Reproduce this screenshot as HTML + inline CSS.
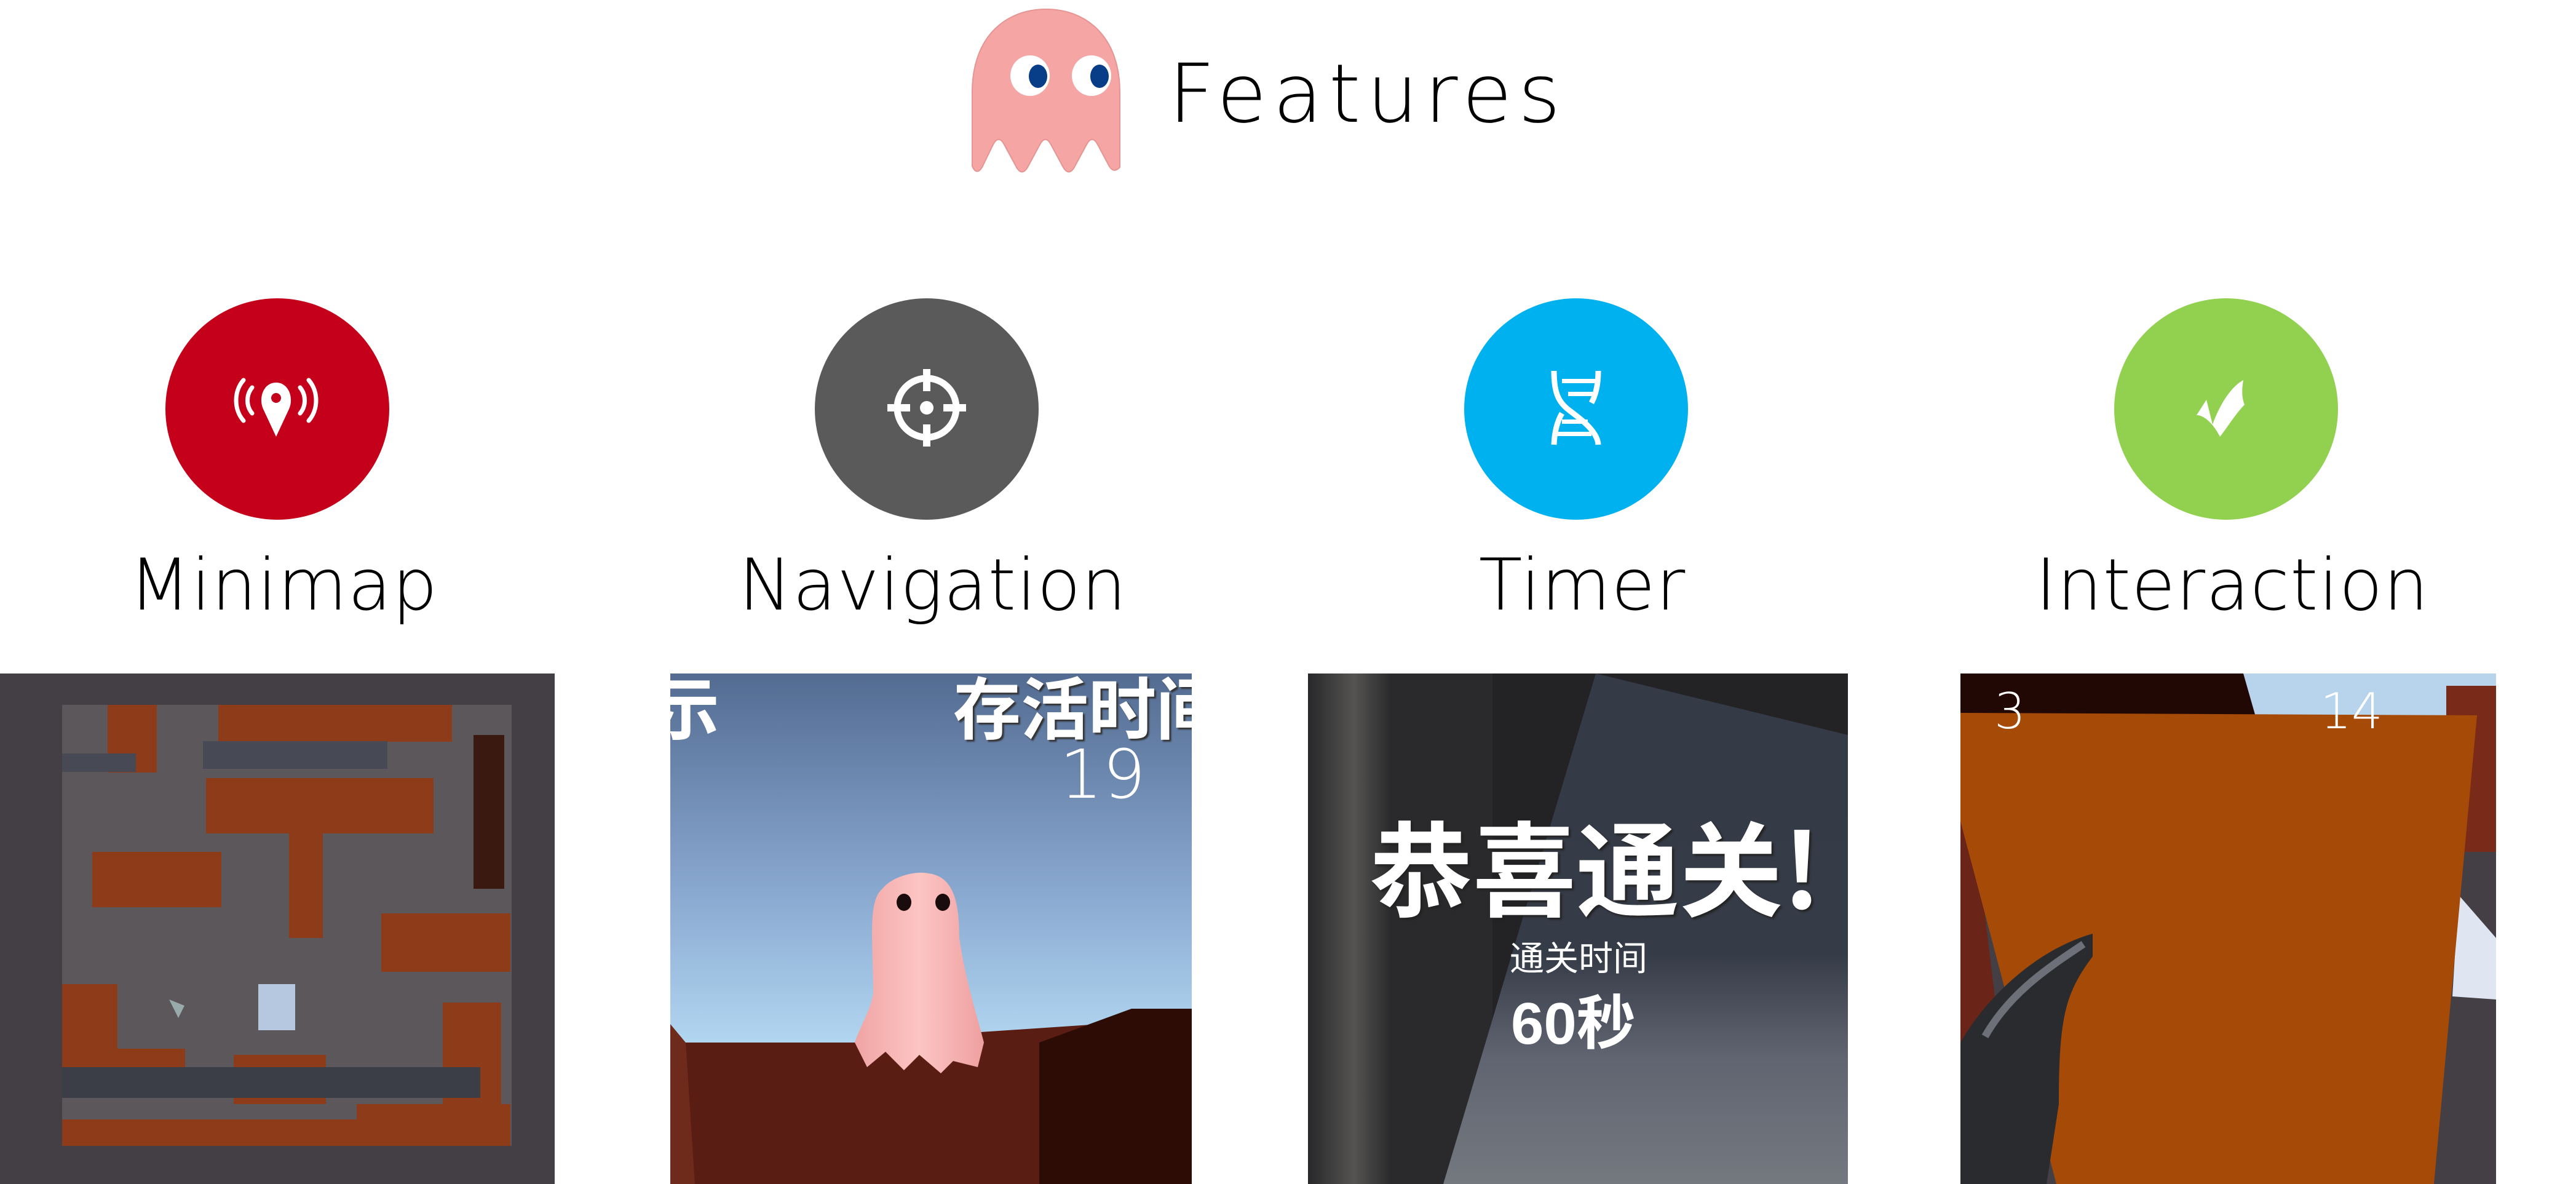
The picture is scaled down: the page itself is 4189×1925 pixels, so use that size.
<!DOCTYPE html>
<html><head><meta charset="utf-8"><style>
html,body{margin:0;padding:0;background:#fff;}
body{width:4189px;height:1925px;position:relative;overflow:hidden;font-family:"Liberation Sans","Noto Sans CJK SC",sans-serif;}
.abs{position:absolute;}
.circ{position:absolute;width:364px;height:360px;border-radius:50%;}
.lbl{position:absolute;top:882px;height:160px;font-size:116px;font-weight:normal;color:#000;text-align:center;width:700px;letter-spacing:1px;line-height:140px;font-family:"DejaVu Sans","Liberation Sans",sans-serif;font-weight:200;}
.img{position:absolute;top:1095px;height:830px;overflow:hidden;}
</style></head><body>

<svg class="abs" style="left:1575px;top:10px" width="255" height="280" viewBox="0 0 255 280">
<path d="M6,260 L6,140 C6,50 60,5 126,5 C192,5 246,50 246,140 L246,262 C238,270 232,268 226,255 L210,225 C204,214 198,214 192,225 L172,262 C166,272 160,272 154,262 L134,225 C128,214 122,214 116,225 L96,262 C90,272 84,272 78,262 L58,225 C52,214 46,214 40,225 L22,262 C16,272 10,270 6,260 Z" fill="#f5a5a3" stroke="#e59593" stroke-width="2"/>
<ellipse cx="100" cy="113" rx="32" ry="33" fill="#fff"/>
<ellipse cx="200" cy="113" rx="32" ry="33" fill="#fff"/>
<ellipse cx="113" cy="114" rx="15" ry="19" fill="#083d88"/>
<ellipse cx="213" cy="114" rx="15" ry="19" fill="#083d88"/>
</svg>
<div class="abs" style="left:1900px;top:78px;font-size:132px;letter-spacing:10px;line-height:150px;color:#000;font-family:'DejaVu Sans','Liberation Sans',sans-serif;font-weight:200;">Features</div>

<div class="circ" style="left:269px;top:485px;background:#c4001a"></div>
<div class="circ" style="left:1325px;top:485px;background:#5a5a5a"></div>
<div class="circ" style="left:2381px;top:485px;background:#00b1f0"></div>
<div class="circ" style="left:3438px;top:485px;background:#92d050"></div>

<svg class="abs" style="left:370px;top:600px" width="160" height="120" viewBox="370 600 160 120">
<path d="M449,710 L428,665 C420,648 428,622 449,622 C470,622 478,648 470,665 Z" fill="#fff"/>
<circle cx="449" cy="647" r="8" fill="#c4001a"/>
<g fill="none" stroke="#fff" stroke-width="7" stroke-linecap="round">
<path d="M410,630 C400,642 400,660 410,672"/>
<path d="M396,618 C380,636 380,666 396,684"/>
<path d="M488,630 C498,642 498,660 488,672"/>
<path d="M502,618 C518,636 518,666 502,684"/>
</g></svg>

<svg class="abs" style="left:1437px;top:593px" width="140" height="140" viewBox="-70 -70 140 140">
<circle r="48" fill="none" stroke="#fff" stroke-width="11"/>
<circle r="11" fill="#fff"/>
<g fill="#fff"><rect x="-6" y="-63" width="12" height="36"/><rect x="-6" y="27" width="12" height="36"/><rect x="-64" y="-6" width="37" height="12"/><rect x="27" y="-6" width="37" height="12"/></g>
</svg>

<svg class="abs" style="left:2518px;top:598px" width="92" height="130" viewBox="2518 598 92 130">
<g fill="none" stroke="#fff" stroke-width="9">
<path d="M2527,603 C2527,640 2535,655 2553,668 C2566,678 2598,700 2599,723"/>
<path d="M2599,603 C2599,625 2595,642 2588,655"/>
<path d="M2540,672 C2533,684 2528,700 2527,723"/>
</g>
<g fill="#fff"><rect x="2540" y="616" width="56" height="7"/><rect x="2550" y="637" width="40" height="7"/><rect x="2540" y="682" width="42" height="7"/><rect x="2532" y="702" width="56" height="7"/></g>
</svg>

<svg class="abs" style="left:3540px;top:610px" width="140" height="110" viewBox="3540 610 140 110">
<path d="M3572,675 L3588,650 L3598,690 C3612,652 3630,628 3648,618 C3645,636 3646,648 3650,658 C3636,672 3622,695 3610,710 C3600,690 3585,675 3572,675 Z" fill="#fff"/>
</svg>

<div class="lbl" style="left:111px;">Minimap</div>
<div class="lbl" style="left:1167px;">Navigation</div>
<div class="lbl" style="left:2223px;">Timer</div>
<div class="lbl" style="left:3280px;">Interaction</div>

<div class="img" style="left:0;width:902px;background:#433f44">
<svg width="902" height="830" viewBox="0 0 902 830">
<rect x="101" y="51" width="731" height="717" fill="#5b575a"/>
<g fill="#8e3b1a">
<rect x="175" y="51" width="80" height="110"/>
<rect x="355" y="51" width="380" height="60"/>
<rect x="335" y="170" width="370" height="90"/>
<rect x="470" y="240" width="55" height="190"/>
<rect x="150" y="290" width="210" height="90"/>
<rect x="620" y="390" width="210" height="95"/>
<rect x="101" y="505" width="90" height="180"/>
<rect x="101" y="610" width="200" height="75"/>
<rect x="380" y="620" width="150" height="80"/>
<rect x="720" y="535" width="95" height="200"/>
<rect x="580" y="700" width="250" height="68"/>
<rect x="101" y="725" width="530" height="43"/>
</g>
<rect x="101" y="130" width="120" height="30" fill="#474a55"/>
<rect x="330" y="110" width="300" height="45" fill="#474a55"/>
<rect x="101" y="640" width="680" height="50" fill="#3b3e46"/>
<rect x="770" y="100" width="50" height="250" fill="#3a1a10"/>
<rect x="420" y="505" width="60" height="75" fill="#b6c7e0"/>
<polygon points="275,530 300,540 290,560" fill="#9aa"/>
</svg></div>

<div class="img" style="left:1090px;width:848px;">
<svg width="848" height="830" viewBox="0 0 848 830">
<defs><linearGradient id="sky" x1="0" y1="0" x2="0" y2="1"><stop offset="0" stop-color="#536b91"/><stop offset="0.55" stop-color="#86a5cd"/><stop offset="1" stop-color="#b3d8f2"/></linearGradient>
<linearGradient id="gh" x1="0" y1="0" x2="1" y2="0"><stop offset="0" stop-color="#f0a4a4"/><stop offset="0.5" stop-color="#fcc5c3"/><stop offset="1" stop-color="#eea0a0"/></linearGradient></defs>
<rect width="848" height="610" fill="url(#sky)"/>
<polygon points="0,600 360,600 400,590 848,560 848,830 0,830" fill="#5a1d13"/>
<polygon points="600,600 750,545 848,545 848,830 600,830" fill="#2d0c06"/>
<polygon points="0,570 25,600 40,830 0,830" fill="#6e2a1a"/>
<path d="M330,520 C330,440 320,370 345,350 C360,330 400,320 420,325 C460,330 470,370 470,430 C480,500 500,560 510,600 L500,640 L460,630 L440,650 L405,620 L380,645 L350,615 L320,640 L300,600 C310,570 325,550 330,520 Z" fill="url(#gh)"/>
<ellipse cx="380" cy="372" rx="12" ry="14" fill="#1a0c0c"/>
<ellipse cx="443" cy="372" rx="12" ry="14" fill="#1a0c0c"/>
</svg>
<div class="abs" style="left:-30px;top:-30px;color:#fff;font-weight:bold;font-size:110px;font-family:'Liberation Sans','Noto Sans CJK SC',sans-serif;">示</div>
<div class="abs" style="left:460px;top:-30px;color:#fff;font-weight:bold;font-size:110px;white-space:nowrap;font-family:'Liberation Sans','Noto Sans CJK SC',sans-serif;text-shadow:3px 3px 2px #333;">存活时间</div>
<div class="abs" style="left:633px;top:100px;color:#fff;font-size:110px;font-family:'DejaVu Sans',sans-serif;font-weight:200;">19</div>
</div>

<div class="img" style="left:2127px;width:878px;">
<svg width="878" height="830" viewBox="0 0 878 830">
<defs><linearGradient id="g3" x1="0" y1="0" x2="0" y2="1"><stop offset="0" stop-color="#343a46"/><stop offset="0.55" stop-color="#363c47"/><stop offset="0.75" stop-color="#5f6470"/><stop offset="1" stop-color="#747980"/></linearGradient>
<linearGradient id="g3l" x1="0" y1="0" x2="1" y2="0"><stop offset="0" stop-color="#2a2a2c"/><stop offset="0.25" stop-color="#6a6864"/><stop offset="0.45" stop-color="#2d2d2f"/></linearGradient></defs>
<rect width="878" height="830" fill="#232325"/>
<rect width="300" height="830" fill="url(#g3l)" opacity="0.7"/>
<polygon points="468,0 878,100 878,830 220,830" fill="url(#g3)"/>
</svg>
<div class="abs" style="left:100px;top:210px;color:#fff;font-weight:bold;font-size:168px;white-space:nowrap;font-family:'Noto Sans CJK SC',sans-serif;text-shadow:3px 3px 3px #222;line-height:200px;">恭喜通关!</div>
<div class="abs" style="left:328px;top:420px;color:#fff;font-size:56px;white-space:nowrap;font-family:'Noto Sans CJK SC',sans-serif;line-height:80px;">通关时间</div>
<div class="abs" style="left:330px;top:510px;color:#fff;font-weight:bold;font-size:96px;white-space:nowrap;font-family:'Liberation Sans','Noto Sans CJK SC',sans-serif;line-height:120px;">60秒</div>
</div>

<div class="img" style="left:3188px;width:871px;">
<svg width="871" height="830" viewBox="0 0 871 830">
<rect width="871" height="830" fill="#433f44"/>
<rect width="871" height="70" fill="#b7d4ec"/>
<polygon points="0,0 460,0 480,70 0,70" fill="#220805"/>
<rect x="790" y="20" width="81" height="270" fill="#7a2a18"/>
<polygon points="0,60 0,620 60,560" fill="#6a2418"/>
<polygon points="810,360 871,430 871,530 800,525" fill="#dfe6f2"/>
<polygon points="0,64 840,68 770,830 156,830 0,240" fill="#a64a08"/>
<path d="M0,600 C40,530 120,450 215,423 L215,460 C170,520 160,560 160,700 L140,830 L0,830 Z" fill="#2a2b2f"/>
<path d="M40,590 C80,520 140,480 200,440" stroke="#6d7078" stroke-width="12" fill="none"/>
</svg>
<div class="abs" style="left:55px;top:15px;color:#fff;font-size:80px;font-family:'DejaVu Sans',sans-serif;font-weight:200;">3</div>
<div class="abs" style="left:585px;top:15px;color:#fff;font-size:80px;font-family:'DejaVu Sans',sans-serif;font-weight:200;">14</div>
</div>

</body></html>
